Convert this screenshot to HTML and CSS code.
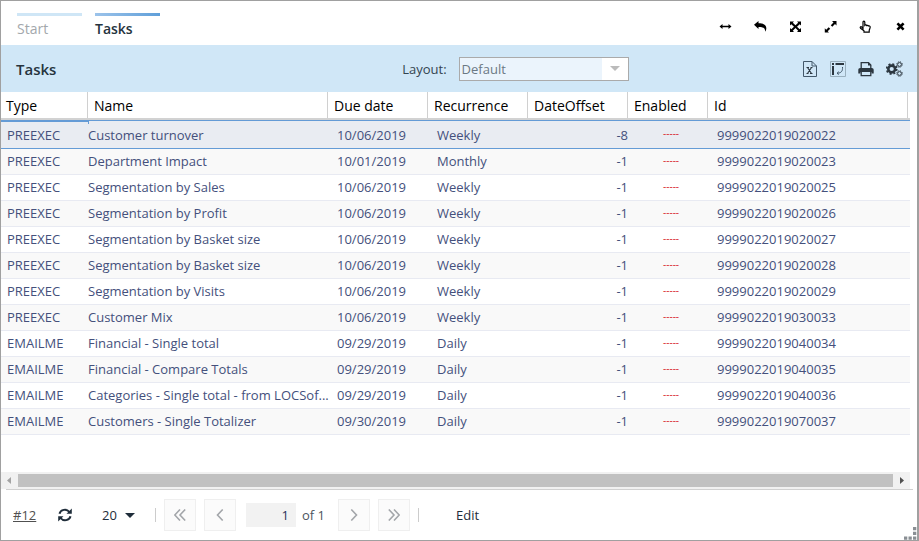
FILE: index.html
```html
<!DOCTYPE html>
<html lang="en">
<head>
<meta charset="utf-8">
<title>Tasks</title>
<link rel="stylesheet" href="styles.css">
</head>
<body>
<div class="window">
  <header class="topbar">
    <nav class="tabs">
      <a class="tab" href="#start">Start</a>
      <a class="tab tab-active" href="#tasks" aria-current="page">Tasks</a>
    </nav>
    <div class="window-tools">
      <button type="button" aria-label="Fit width"><svg viewBox="0 0 13 13"><path d="M.5 6.500 3.500 4v1.700h6V4l3 2.500-3 2.500V7.300h-6V9z"/></svg></button>
      <button type="button" aria-label="Back"><svg viewBox="0 0 13 13"><path d="M0 4.700 4.500 1v2.300C9.500 3.300 12.500 5 12.300 8.300c0 1.400-.5 2.500-1.200 3.400.3-3.500-1.600-4.800-6.600-4.800v2z"/></svg></button>
      <button type="button" aria-label="Maximize"><svg viewBox="0 0 13 13"><path d="M1 1.500h4L3.800 2.700 6.500 5.300l2.700-2.600L8 1.500h4v4l-1.300-1.300L8 6.700l2.700 2.500L12 8v4H8l1.200-1.200L6.500 8.100l-2.700 2.700L5 12H1V8l1.300 1.200L5 6.700 2.300 4.200 1 5.500z"/></svg></button>
      <button type="button" aria-label="Expand"><svg viewBox="0 0 13 13"><path d="M8 1h4.500v4.500L11 4 8.300 6.700 6.800 5.200 9.500 2.500zM4.700 7.300l1.500 1.500-2.500 2.500 1.300 1.200H.8V8.300l1.400 1.500z"/></svg></button>
      <button type="button" aria-label="Touch mode"><svg viewBox="0 0 13 13"><path class="outline" d="M4 8.500V2.300c0-1.500 1.800-1.500 1.800 0v3c.6-.6 1.500-.5 1.800.2.600-.4 1.400-.2 1.700.5.900-.3 1.900.1 1.900 1.100 0 1.700-1 2.200-1 3.400v1.700H5v-1.500L1.500 8.200C.7 7.300 1.700 6.300 2.700 7z"/></svg></button>
      <button type="button" aria-label="Close"><svg viewBox="0 0 13 13"><path d="m2.500 4.200 1.800-1.800 2.200 2.200 2.200-2.200 1.800 1.800-2.200 2.300 2.200 2.200-1.800 1.900-2.200-2.300-2.200 2.300-1.800-1.900 2.200-2.200z"/></svg></button>
    </div>
  </header>

  <section class="panel-head">
    <h1>Tasks</h1>
    <div class="layout-field">
      <label for="layout">Layout:</label>
      <div class="combo">
        <select id="layout"><option>Default</option></select>
        <svg class="combo-arrow" viewBox="0 0 10 5"><path d="M0 0h10L5 5z"/></svg>
      </div>
    </div>
    <div class="panel-tools">
      <button type="button" aria-label="Export to Excel"><svg viewBox="0 0 16 16"><path class="page" d="M1.500.5H10l4.500 4.500v10.500h-13zM10 .5V5h4.500"/><path class="x" d="M4.500 6.500H7m1.500 0h2M4.500 12.500h2m1.500 0h2.500M5.500 6.500l4 6M9.500 6.500l-4 6"/></svg></button>
      <button type="button" aria-label="Pivot"><svg viewBox="0 0 16 16"><path class="frame" d="M.5.500h15v15H.5z"/><path d="M2 2h2v2H2zM5.500 2H14v2H5.500zM2 5h2v9H2z"/><path class="page" d="M12.500 6c.3 4-1 6-5.500 6.300m1.800-1.600L7 12.300l1.800 1.200"/></svg></button>
      <button type="button" aria-label="Print"><svg viewBox="0 0 16 16"><path class="line" d="M3.200 8V1.700h7.300l2.300 2.300v4"/><path d="M2.300 7h11.400c1.400 0 2 .8 2 2v3.500h-2.200V11h-11v1.500H.3V9c0-1.200.6-2 2-2zM10 1v3.500h3.400z"/><path class="line" d="M3.200 11v3.700h9.600V11"/></svg></button>
      <button type="button" aria-label="Settings"><svg viewBox="0 0 17 16"><circle class="gear-body" cx="5.700" cy="8" r="3.400"/><circle class="gear-teeth" cx="5.700" cy="8" r="5"/><circle class="small-body" cx="13.500" cy="3.500" r="1.900"/><circle class="small-teeth" cx="13.500" cy="3.500" r="2.800"/><circle class="small-body" cx="13.500" cy="12.500" r="1.900"/><circle class="small-teeth" cx="13.500" cy="12.500" r="2.800"/></svg></button>
    </div>
  </section>

  <main class="grid">
    <table>
      <colgroup><col class="c-type"><col class="c-name"><col class="c-mid"><col class="c-mid"><col class="c-mid"><col class="c-enabled"><col></colgroup>
      <thead>
        <tr><th>Type</th><th>Name</th><th>Due date</th><th>Recurrence</th><th>DateOffset</th><th>Enabled</th><th>Id</th></tr>
      </thead>
      <tbody>
        <tr class="selected"><td>PREEXEC</td><td>Customer turnover</td><td>10/06/2019</td><td>Weekly</td><td>-8</td><td>-----</td><td>9999022019020022</td></tr>
        <tr><td>PREEXEC</td><td>Department Impact</td><td>10/01/2019</td><td>Monthly</td><td>-1</td><td>-----</td><td>9999022019020023</td></tr>
        <tr><td>PREEXEC</td><td>Segmentation by Sales</td><td>10/06/2019</td><td>Weekly</td><td>-1</td><td>-----</td><td>9999022019020025</td></tr>
        <tr><td>PREEXEC</td><td>Segmentation by Profit</td><td>10/06/2019</td><td>Weekly</td><td>-1</td><td>-----</td><td>9999022019020026</td></tr>
        <tr><td>PREEXEC</td><td>Segmentation by Basket size</td><td>10/06/2019</td><td>Weekly</td><td>-1</td><td>-----</td><td>9999022019020027</td></tr>
        <tr><td>PREEXEC</td><td>Segmentation by Basket size</td><td>10/06/2019</td><td>Weekly</td><td>-1</td><td>-----</td><td>9999022019020028</td></tr>
        <tr><td>PREEXEC</td><td>Segmentation by Visits</td><td>10/06/2019</td><td>Weekly</td><td>-1</td><td>-----</td><td>9999022019020029</td></tr>
        <tr><td>PREEXEC</td><td>Customer Mix</td><td>10/06/2019</td><td>Weekly</td><td>-1</td><td>-----</td><td>9999022019030033</td></tr>
        <tr><td>EMAILME</td><td>Financial - Single total</td><td>09/29/2019</td><td>Daily</td><td>-1</td><td>-----</td><td>9999022019040034</td></tr>
        <tr><td>EMAILME</td><td>Financial - Compare Totals</td><td>09/29/2019</td><td>Daily</td><td>-1</td><td>-----</td><td>9999022019040035</td></tr>
        <tr><td>EMAILME</td><td>Categories - Single total - from LOCSof...</td><td>09/29/2019</td><td>Daily</td><td>-1</td><td>-----</td><td>9999022019040036</td></tr>
        <tr><td>EMAILME</td><td>Customers - Single Totalizer</td><td>09/30/2019</td><td>Daily</td><td>-1</td><td>-----</td><td>9999022019070037</td></tr>
      </tbody>
    </table>
  </main>

  <div class="scrollbar">
    <svg class="arrow-off" viewBox="0 0 4 7"><path d="M4 0v7L0 3.500z"/></svg>
    <div class="thumb"></div>
    <svg class="arrow-on" viewBox="0 0 4 7"><path d="M0 0v7l4-3.500z"/></svg>
  </div>

  <footer class="pager">
    <a class="count" href="#rows">#12</a>
    <button class="refresh" type="button" aria-label="Refresh"><svg viewBox="0 0 14 14"><path class="arc" d="M1.500 5.800C2.500 1.500 8.500.2 11.400 4M12.500 8.200c-1 4.300-7 5.600-9.900 1.800"/><path d="M13.800.500v5.300H8.500zM.2 13.500V8.200h5.300z"/></svg></button>
    <div class="page-size">
      <select aria-label="Rows per page"><option>20</option></select>
      <svg class="caret" viewBox="0 0 10 5"><path d="M0 0h10L5 5z"/></svg>
    </div>
    <span class="separator"></span>
    <button class="page-button" type="button" aria-label="First page"><svg viewBox="0 0 12 12"><path d="M6 .5.800 6 6 11.500M11.200.5 6 6l5.200 5.500"/></svg></button>
    <button class="page-button" type="button" aria-label="Previous page"><svg viewBox="0 0 12 12"><path d="M8.700.5 3.500 6l5.200 5.500"/></svg></button>
    <input class="page-number" type="text" value="1" aria-label="Page">
    <span class="of">of 1</span>
    <button class="page-button" type="button" aria-label="Next page"><svg viewBox="0 0 12 12"><path d="M3.300.5 8.500 6l-5.200 5.500"/></svg></button>
    <button class="page-button" type="button" aria-label="Last page"><svg viewBox="0 0 12 12"><path d="M.8.500 6 6 .8 11.500M6 .5 11.200 6 6 11.500"/></svg></button>
    <span class="separator"></span>
    <button class="edit" type="button">Edit</button>
  </footer>
  <svg class="grip" viewBox="0 0 13 13"><path d="M9 0h3.300v3.300H9zM9 4.700h3.300V8H9zM9 9.500h3.300v3.300H9zM4.500 9.500h3.300v3.300H4.500zM0 9.500h3.300v3.300H0z"/></svg>
</div>
</body>
</html>
```
FILE: styles.css
```css
* {
  box-sizing: border-box;
}

body {
  margin: 0;
  font: 13px/20px "Open Sans", sans-serif;
  color: #1f2d3a;
}

button,
select,
input {
  font: inherit;
  color: inherit;
  border: 0;
  padding: 0;
  margin: 0;
  background: none;
  border-radius: 0;
  appearance: none;
}

svg {
  display: block;
  fill: currentColor;
}

.window {
  position: relative;
  display: flex;
  flex-direction: column;
  min-height: 100vh;
  border: 1px solid #a0a0a0;
  border-right-width: 2px;
  background: #fff;
}

.topbar {
  display: flex;
  justify-content: space-between;
  height: 44px;
  padding: 12px 10px 0 16px;
}

.tabs {
  display: flex;
  gap: 13px;
}

.tab {
  width: 65px;
  color: #a3a8ac;
  font-size: 14px;
  text-decoration: none;
}

.tab::before {
  content: "";
  display: block;
  height: 3px;
  margin-bottom: 3px;
  background: #cfe6f6;
}

.tab-active {
  color: #26343e;
  font-weight: 600;
}

.tab-active::before {
  background: linear-gradient(90deg, #9cc3ea, #5f9fd9);
}

.window-tools {
  display: flex;
  gap: 22px;
  padding-top: 7px;
  color: #000;
}

.window-tools svg {
  width: 13px;
  height: 13px;
}

.window-tools button {
  height: 13px;
}

.outline {
  fill: none;
  stroke: #000;
  stroke-width: 1.2;
}

.panel-head {
  display: flex;
  align-items: center;
  height: 47px;
  padding: 0 14px 0 15px;
  background: #d0e7f7;
}

h1 {
  flex: 387;
  margin: 0;
  font-size: 15px;
  font-weight: 600;
  color: #26343e;
}

.layout-field {
  display: flex;
  align-items: center;
  gap: 12px;
  color: #34444f;
}

.combo {
  display: flex;
  align-items: center;
  position: relative;
  width: 170px;
  height: 24px;
  border: 1px solid #aaa;
  background: linear-gradient(90deg, #ebf4fc calc(100% - 26px), #fff 0);
}

.combo select {
  width: 100%;
  height: 22px;
  padding: 0 26px 0 2px;
  color: #6b7984;
}

.combo-arrow {
  position: absolute;
  right: 8px;
  width: 10px;
  height: 5px;
  fill: #bbb;
  pointer-events: none;
}

.panel-tools {
  flex: 275;
  display: flex;
  justify-content: flex-end;
  gap: 12px;
  color: #2c3740;
}

.panel-tools svg {
  width: 16px;
  height: 16px;
}

.panel-tools button:last-child svg {
  width: 17px;
}

.line,
.page,
.x,
.frame {
  fill: none;
  stroke: currentColor;
  stroke-width: 1.3;
}

.page {
  stroke: #43586a;
  stroke-width: 1;
}

.frame {
  stroke: #9ab0be;
  stroke-width: 1;
}

.x {
  stroke-width: 1.1;
}

.gear-body,
.gear-teeth,
.small-body,
.small-teeth {
  fill: none;
  stroke: currentColor;
}

.gear-body {
  stroke-width: 2.6;
}

.gear-teeth {
  stroke-width: 1.8;
  stroke-dasharray: 2 1.93;
}

.small-body {
  stroke-width: 1;
}

.small-teeth {
  stroke-width: 1;
  stroke-dasharray: 1.1 1.1;
}

.grid {
  flex: 1;
  padding-right: 7px;
}

table {
  width: 100%;
  table-layout: fixed;
  border-collapse: separate;
  border-spacing: 0;
}

.c-type {
  width: 87px;
}

.c-name {
  width: 240px;
}

.c-mid {
  width: 100px;
}

.c-enabled {
  width: 80px;
}

th {
  height: 28px;
  padding: 2px 0 0 6px;
  border-bottom: 2px solid #d2d2d2;
  background: linear-gradient(#d0d0d0, #d0d0d0) right / 1px 100% no-repeat;
  color: #000;
  font-size: 14px;
  font-weight: 400;
  text-align: left;
}

th:first-child {
  padding-left: 5px;
}

th:last-child {
  background-position: right 2px top;
}

td {
  height: 26px;
  padding: 0 0 2px 9px;
  border-bottom: 1px solid #e8eaf2;
  color: #44507c;
  white-space: nowrap;
}

td:nth-child(1) {
  padding-left: 6px;
}

td:nth-child(2) {
  padding-left: 0;
  padding-right: 0;
}

td:nth-child(5) {
  padding-left: 0;
  text-align: right;
}

td:nth-child(6) {
  padding: 0 0 4px 35px;
  color: #d8232a;
  font-size: 10px;
}

tbody tr:nth-child(even) {
  background: #f9f9f9;
}

.selected td {
  height: 29px;
  border-top: 1px solid #649bd6;
  border-bottom-color: #649bd6;
  background: #e9ecf2;
}

.selected td:not(:nth-child(6)) {
  padding-bottom: 0;
}

.selected td:first-child {
  position: relative;
  box-shadow: inset 0 1px #649bd6;
}

.selected td:first-child::after {
  content: "";
  position: absolute;
  top: 0;
  right: -1px;
  width: 1px;
  height: 3px;
  background: #649bd6;
}

.scrollbar {
  display: flex;
  align-items: center;
  height: 17px;
  margin-right: 7px;
  padding: 0 6px;
  gap: 7px;
  background: #f1f1f1;
}

.scrollbar svg {
  width: 4px;
  height: 7px;
}

.arrow-off {
  fill: #a3a3a3;
}

.arrow-on {
  fill: #505050;
}

.thumb {
  flex: 1;
  height: 13px;
  background: #c1c1c1;
}

.pager {
  display: flex;
  align-items: center;
  height: 51px;
  margin: 0 4px 0 5px;
  padding-left: 7px;
  border-top: 1px solid #d0d0d0;
}

.count {
  width: 45px;
  color: #505050;
}

.refresh {
  width: 44px;
}

.refresh svg {
  width: 14px;
  height: 14px;
}

.arc {
  fill: none;
  stroke: currentColor;
  stroke-width: 2;
}

.page-size {
  position: relative;
  display: flex;
  align-items: center;
  width: 53px;
}

.page-size select {
  width: 33px;
}

.caret {
  position: absolute;
  left: 23px;
  width: 10px;
  height: 5px;
  pointer-events: none;
}

.separator {
  width: 1px;
  height: 14px;
  background: #ccc;
}

.page-button {
  display: grid;
  place-items: center;
  width: 32px;
  height: 32px;
  margin-left: 8px;
  border: 1px solid #efefef;
  background: #fbfbfb;
}

.page-button svg {
  width: 12px;
  height: 12px;
  fill: none;
  stroke: #a3a6aa;
  stroke-width: 1.6;
}

.page-number {
  width: 50px;
  height: 24px;
  margin-left: 10px;
  padding-right: 7px;
  background: #f2f2f2;
  text-align: right;
  color: #26305c;
}

.of {
  width: 28px;
  margin-left: 6px;
  color: #4c5560;
}

.page-button + .separator {
  margin-left: 8px;
}

.edit {
  margin-left: 37px;
}

.grip {
  position: absolute;
  right: 0;
  bottom: 0;
  width: 13px;
  height: 13px;
  fill: #8a8f94;
}
```
